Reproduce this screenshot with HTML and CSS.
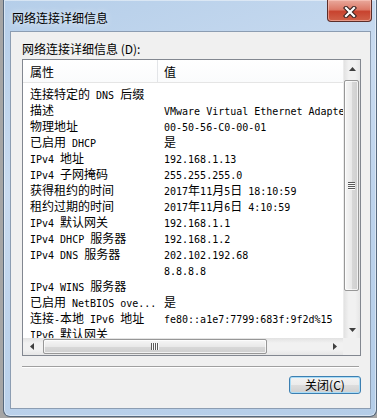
FILE: index.html
```html
<!DOCTYPE html>
<html lang="zh-CN">

<head>
    <meta charset="UTF-8">
    <meta name="viewport" content="width=device-width, initial-scale=1.0">
    <title>网络连接详细信息</title>
    <link rel="stylesheet" href="styles.css">
</head>

<body>
    <div class="window">
        <div class="titlebar">
            <span class="title">网络连接详细信息</span>
            <button class="close-btn" title="关闭">
                <svg width="14" height="12" viewBox="0 0 14 12">
                    <path d="M3 2 L11 10 M11 2 L3 10" stroke="#3a2422" stroke-width="4.4" stroke-linecap="square" />
                    <path d="M3 2 L11 10 M11 2 L3 10" stroke="#fff" stroke-width="2.2" stroke-linecap="square" />
                </svg>
            </button>
        </div>

        <div class="client">
            <div class="group-label">网络连接详细信息 (D):</div>

            <div class="list">
                <div class="list-main">
                    <div class="list-view">
                        <div class="header">
                            <div class="prop">属性</div>
                            <div class="val">值</div>
                        </div>
                        <div class="rows">
                            <div class="row"><div class="prop">连接特定的<span class="m"> DNS </span>后缀</div><div class="val"></div></div>
                            <div class="row"><div class="prop">描述</div><div class="val"><span class="m">VMware Virtual Ethernet Adapter for VMnet8</span></div></div>
                            <div class="row"><div class="prop">物理地址</div><div class="val"><span class="m">00-50-56-C0-00-01</span></div></div>
                            <div class="row"><div class="prop">已启用<span class="m"> DHCP</span></div><div class="val">是</div></div>
                            <div class="row"><div class="prop"><span class="m">IPv4 </span>地址</div><div class="val"><span class="m">192.168.1.13</span></div></div>
                            <div class="row"><div class="prop"><span class="m">IPv4 </span>子网掩码</div><div class="val"><span class="m">255.255.255.0</span></div></div>
                            <div class="row"><div class="prop">获得租约的时间</div><div class="val"><span class="m">2017</span>年<span class="m">11</span>月<span class="m">5</span>日<span class="m"> 18:10:59</span></div></div>
                            <div class="row"><div class="prop">租约过期的时间</div><div class="val"><span class="m">2017</span>年<span class="m">11</span>月<span class="m">6</span>日<span class="m"> 4:10:59</span></div></div>
                            <div class="row"><div class="prop"><span class="m">IPv4 </span>默认网关</div><div class="val"><span class="m">192.168.1.1</span></div></div>
                            <div class="row"><div class="prop"><span class="m">IPv4 DHCP </span>服务器</div><div class="val"><span class="m">192.168.1.2</span></div></div>
                            <div class="row"><div class="prop"><span class="m">IPv4 DNS </span>服务器</div><div class="val"><span class="m">202.102.192.68</span></div></div>
                            <div class="row"><div class="prop"></div><div class="val"><span class="m">8.8.8.8</span></div></div>
                            <div class="row"><div class="prop"><span class="m">IPv4 WINS </span>服务器</div><div class="val"></div></div>
                            <div class="row"><div class="prop">已启用<span class="m"> NetBIOS ove...</span></div><div class="val">是</div></div>
                            <div class="row"><div class="prop">连接<span class="m">-</span>本地<span class="m"> IPv6 </span>地址</div><div class="val"><span class="m">fe80::a1e7:7799:683f:9f2d%15</span></div></div>
                            <div class="row"><div class="prop"><span class="m">IPv6 </span>默认网关</div><div class="val"></div></div>
                        </div>
                    </div>

                    <!-- vertical scrollbar -->
                    <div class="vscroll">
                        <div class="sb-btn">
                            <svg width="7" height="4" viewBox="0 0 7 4"><polygon points="3.5,0 7,4 0,4" fill="#3f3f3f" /></svg>
                        </div>
                        <div class="vtrack">
                            <div class="vthumb"><span class="grip-h"></span></div>
                        </div>
                        <div class="sb-btn">
                            <svg width="7" height="4" viewBox="0 0 7 4"><polygon points="0,0 7,0 3.5,4" fill="#3f3f3f" /></svg>
                        </div>
                    </div>
                </div>

                <!-- horizontal scrollbar -->
                <div class="hscroll-row">
                    <div class="hscroll">
                        <div class="sb-btn">
                            <svg width="4" height="7" viewBox="0 0 4 7"><polygon points="0,3.5 4,0 4,7" fill="#3f3f3f" /></svg>
                        </div>
                        <div class="htrack">
                            <div class="hthumb"><span class="grip-v"></span></div>
                        </div>
                        <div class="sb-btn">
                            <svg width="4" height="7" viewBox="0 0 4 7"><polygon points="0,0 4,3.5 0,7" fill="#3f3f3f" /></svg>
                        </div>
                    </div>
                    <div class="corner"></div>
                </div>
            </div>

            <div class="separator"></div>

            <div class="actions">
                <button class="btn">关闭(C)</button>
            </div>
        </div>
    </div>
</body>

</html>
```

FILE: styles.css
```css
* {
    box-sizing: border-box;
}

body {
    margin: 0;
    background: #a5a5a5;
    font-family: "Noto Sans CJK SC", sans-serif;
    font-size: 12px;
    color: #000;
}

/* latin text uses a narrow monospace, like SimSun */
.m {
    font-family: "DejaVu Sans Mono", "Liberation Mono", monospace;
    font-size: 10px;
}

.window {
    width: 374px;
    margin-left: 3px;
    padding: 0 5px 7px 6px;
    border: 1px solid #56687c;
    border-top: none;
    border-radius: 0 0 7px 7px;
    background: linear-gradient(160deg, #b5cee9 0%, #c9dbf0 35%, #bdd3ec 60%, #b4cde8 100%);
    box-shadow: inset 0 0 0 1px rgba(255, 255, 255, 0.45);
}

.titlebar {
    display: flex;
    height: 31px;
}

.title {
    padding: 10px 0 0 2px;
    line-height: 16px;
    text-shadow: 0 0 6px rgba(255, 255, 255, 0.9);
}

.close-btn {
    margin-left: auto;
    margin-right: -1px;
    width: 45px;
    height: 22px;
    padding: 2px 0 0;
    display: flex;
    align-items: center;
    justify-content: center;
    border: 1px solid #5b2d29;
    border-top: none;
    border-radius: 0 0 4px 4px;
    background: linear-gradient(#e9a99c 0%, #dc7a68 45%, #c8432f 55%, #d0624a 100%);
    box-shadow: inset 0 0 0 1px rgba(255, 210, 200, 0.5);
}

.client {
    height: 378px;
    border: 1px solid #8c9db2;
    background: #f0f0f0;
    padding: 9px 9px 0 11px;
}

.group-label {
    height: 16px;
    line-height: 16px;
    margin-bottom: 2px;
}

.list {
    height: 297px;
    border: 1px solid #828790;
    background: #fff;
    display: flex;
    flex-direction: column;
}

.list-main {
    display: flex;
    height: 278px;
}

.list-view {
    width: 320px;
    overflow: hidden;
}

.header {
    display: flex;
    height: 23px;
    border-bottom: 1px solid #e5e5e5;
    background: linear-gradient(#fff, #fafbfc);
    white-space: nowrap;
}

.header .prop {
    flex: none;
    width: 135px;
    padding: 2px 0 0 7px;
    line-height: 20px;
    border-right: 1px solid #e3e5e8;
}

.header .val {
    flex: 1;
    padding: 2px 0 0 6px;
    line-height: 20px;
}

.rows {
    padding-top: 3px;
}

.row {
    display: flex;
    height: 16px;
    line-height: 16px;
    white-space: nowrap;
}

.row .prop {
    flex: none;
    width: 135px;
    padding-left: 7px;
    overflow: hidden;
}

.row .val {
    flex: none;
    padding-left: 6px;
}

/* scrollbars */
.vscroll {
    width: 17px;
    display: flex;
    flex-direction: column;
    background: linear-gradient(to right, #e2e2e2, #f1f1f1 30%, #f1f1f1 70%, #e6e6e6);
    border-left: 1px solid #ececec;
}

.sb-btn {
    flex: none;
    width: 17px;
    height: 17px;
    display: flex;
    align-items: center;
    justify-content: center;
}

.vscroll .sb-btn {
    width: 16px;
}

.vtrack {
    flex: 1;
    padding-top: 3px;
}

.vthumb {
    height: 211px;
    margin: 0 1px 0 0;
    border: 1px solid #979797;
    border-radius: 2px;
    background: linear-gradient(to right, #f6f6f6, #e9e9e9 50%, #d8d8d8 51%, #cfcfcf);
    box-shadow: inset 0 0 0 1px rgba(255, 255, 255, 0.7);
    display: flex;
    align-items: center;
    justify-content: center;
}

.grip-h {
    width: 7px;
    height: 8px;
    background: repeating-linear-gradient(#5a5a5a 0 1px, #fafafa 1px 2px);
}

.hscroll-row {
    display: flex;
    height: 17px;
}

.hscroll {
    width: 320px;
    display: flex;
    background: linear-gradient(#e2e2e2, #f1f1f1 30%, #f1f1f1 70%, #e6e6e6);
}

.htrack {
    flex: 1;
    padding: 1px 0 1px 3px;
}

.hthumb {
    width: 224px;
    height: 15px;
    border: 1px solid #979797;
    border-radius: 2px;
    background: linear-gradient(#f6f6f6, #e9e9e9 50%, #d8d8d8 51%, #cfcfcf);
    box-shadow: inset 0 0 0 1px rgba(255, 255, 255, 0.7);
    display: flex;
    align-items: center;
    justify-content: center;
}

.grip-v {
    width: 8px;
    height: 7px;
    background: repeating-linear-gradient(to right, #5a5a5a 0 1px, #fafafa 1px 2px);
}

.corner {
    flex: 1;
    background: #f0f0f0;
}

.separator {
    width: 337px;
    margin-top: 10px;
    border-top: 1px solid #a0a0a0;
    border-bottom: 1px solid #fff;
}

.actions {
    display: flex;
    justify-content: flex-end;
    margin-top: 8px;
}

.btn {
    width: 72px;
    height: 18px;
    padding: 0;
    font-family: "Noto Sans CJK SC", sans-serif;
    font-size: 12px;
    line-height: 16px;
    color: #000;
    border: 1px solid #3c7fb1;
    border-radius: 3px;
    background: linear-gradient(#f3f3f3 0%, #ebebeb 50%, #dddddd 51%, #cfcfcf 100%);
    box-shadow: inset 0 0 0 1px #a9dcf7;
}
```
